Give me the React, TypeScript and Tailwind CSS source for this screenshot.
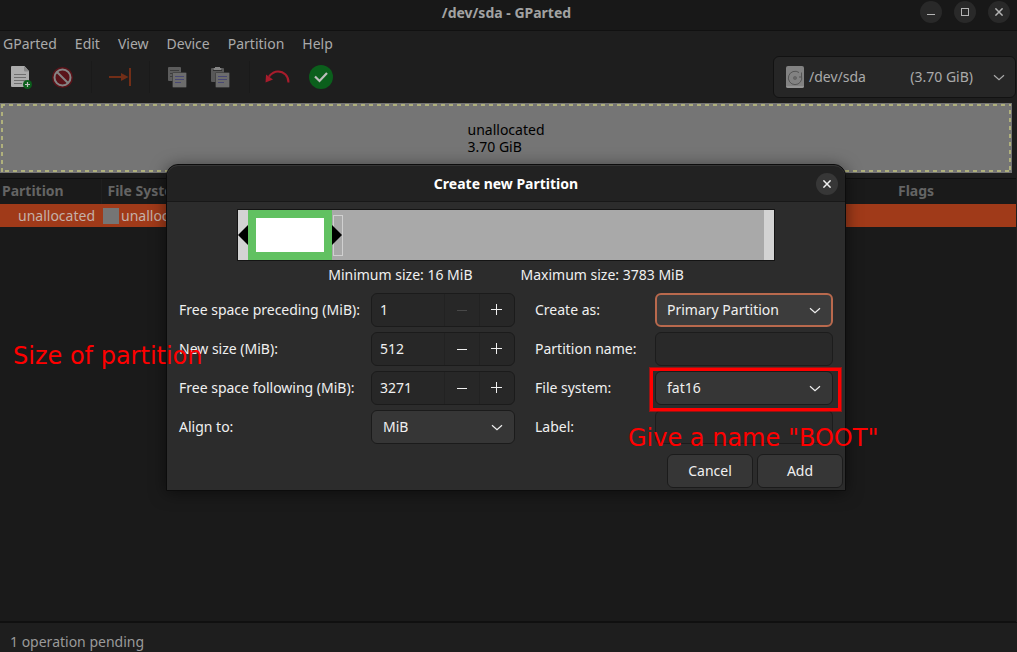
import React from "react";

function Chevron({ className = "" }: { className?: string }) {
  return (
    <svg
      className={`pointer-events-none h-3 w-3 ${className}`}
      viewBox="0 0 12 12"
      fill="none"
      stroke="currentColor"
      strokeWidth="1.2"
      aria-hidden="true"
    >
      <path d="M1 4.200 6 8.600 11 4.200" />
    </svg>
  );
}

function CloseGlyph() {
  return (
    <svg width="8" height="8" viewBox="0 0 8 8" stroke="currentColor" strokeWidth="1.5" aria-hidden="true">
      <path d="M0.4 0.4 7.6 7.6M7.6 0.4 0.4 7.6" />
    </svg>
  );
}

function WindowButton({ label, children }: { label: string; children: React.ReactNode }) {
  return (
    <button
      aria-label={label}
      className="flex h-[22px] w-[22px] items-center justify-center rounded-full bg-[#292929] text-[#b4b4b4]"
    >
      {children}
    </button>
  );
}

function ToolButton({ label, children }: { label: string; children: React.ReactNode }) {
  return (
    <button aria-label={label} className="flex h-10 w-[41px] items-center justify-center">
      {children}
    </button>
  );
}

function ToolSeparator() {
  return <span className="mx-[7px] h-8 w-px bg-[#1a1a1a]" />;
}

function NewIcon() {
  return (
    <svg width="22" height="24" viewBox="0 0 22 24" aria-hidden="true">
      <path d="M2 1h12.500l4.500 5v15a1 1 0 0 1-1 1H2a1 1 0 0 1-1-1V2a1 1 0 0 1 1-1z" fill="#acacac" />
      <path d="M14 1v4.500a1 1 0 0 0 1 1h4z" fill="#8a8a8a" />
      <path d="M4 9.500h12M4 12.500h12M4 15.500h12M4 18.500h8" stroke="#6e6e6e" />
      <circle cx="17.500" cy="19.500" r="4.500" fill="#0b5f1c" />
      <path d="M17.500 17v5M15 19.500h5" stroke="#c0c0c0" strokeWidth="1.200" />
    </svg>
  );
}

function ForbiddenIcon() {
  return (
    <svg width="22" height="22" viewBox="0 0 22 22" fill="none" aria-hidden="true">
      <circle cx="10.500" cy="11.500" r="10.500" fill="#5a1319" />
      <circle cx="10.500" cy="11.500" r="8" stroke="#858585" strokeWidth="2" />
      <path d="M5 6 16 17" stroke="#858585" strokeWidth="2" />
    </svg>
  );
}

function ResizeIcon() {
  return (
    <svg width="24" height="20" viewBox="0 0 24 20" aria-hidden="true">
      <path d="M0 10h13" stroke="#722e17" strokeWidth="2" />
      <path d="M12 6 19.500 10 12 14z" fill="#722e17" />
      <path d="M21 1v18" stroke="#722e17" strokeWidth="2" />
    </svg>
  );
}

function CopyIcon() {
  return (
    <svg width="24" height="22" viewBox="0 0 24 22" aria-hidden="true">
      <rect x="1" y="1" width="13" height="14" rx="1" fill="#5c5c5c" />
      <path d="M3 4.500h9M3 7.500h3M3 10.500h3" stroke="#3c3c3c" />
      <rect x="5.500" y="6.500" width="14" height="15" rx="1" fill="#6c6c6c" stroke="#333" strokeWidth="0.600" />
      <path d="M8 10.500h9M8 13.500h9M8 16.500h6" stroke="#484874" />
    </svg>
  );
}

function PasteIcon() {
  return (
    <svg width="22" height="22" viewBox="0 0 22 22" aria-hidden="true">
      <rect x="1" y="2" width="13" height="14" rx="1" fill="#585858" />
      <path d="M3 2.500h9v2.500H3z" fill="#303030" />
      <path d="M5 1h5v1h1.500v2h-8V2H5z" fill="#858585" />
      <rect x="5.500" y="6.500" width="14" height="15" rx="1" fill="#6c6c6c" stroke="#333" strokeWidth="0.600" />
      <path d="M8 10.500h9M8 13.500h9M8 16.500h6" stroke="#484874" />
    </svg>
  );
}

function UndoIcon() {
  return (
    <svg width="28" height="14" viewBox="0 0 28 14" fill="none" aria-hidden="true">
      <path d="M4 6.500C6.500 3.500 9.500 1.500 13 1.500C19 1.500 23.500 6 23.500 12.500" stroke="#a81c2c" strokeWidth="2" />
      <path d="M1 4.500 0.500 12.500 8 9.500z" fill="#a81c2c" />
    </svg>
  );
}

function ApplyIcon() {
  return (
    <svg width="24" height="24" viewBox="0 0 24 24" fill="none" aria-hidden="true">
      <circle cx="12" cy="12" r="12" fill="#0b5f1c" />
      <path d="m6 11.500 4.500 4.500 7.500-8" stroke="#bdbdbd" strokeWidth="2.200" />
    </svg>
  );
}

function DiskIcon() {
  return (
    <svg width="18" height="22" viewBox="0 0 18 22" fill="none" aria-hidden="true">
      <rect width="18" height="22" rx="2" fill="#828282" />
      <path d="M0 20h18v0a2 2 0 0 1-2 2H2a2 2 0 0 1-2-2z" fill="#949494" />
      <path d="M15.500 10a6.700 6.700 0 1 1-2.500-3.500" stroke="#555" />
      <path d="M15.500 6.500v4.500h-2.500" stroke="#555" />
      <circle cx="9" cy="12" r="1.800" fill="#555" />
      <circle cx="9" cy="12" r="0.700" fill="#828282" />
    </svg>
  );
}

const menus = ["GParted", "Edit", "View", "Device", "Partition", "Help"];

function MainWindow() {
  return (
    <div className="flex min-h-screen flex-col">
      <header className="grid h-[31px] grid-cols-[1fr_auto_1fr] border-b border-[#111] bg-[#181818]">
        <h1 className="col-start-2 pt-[3px] pr-1 text-sm leading-5 font-bold text-[#a2a2a2]">/dev/sda - GParted</h1>
        <div className="flex justify-end gap-3 pt-px pr-[7px]">
          <WindowButton label="Minimize">
            <span className="mt-1 h-px w-2 bg-current" />
          </WindowButton>
          <WindowButton label="Maximize">
            <span className="h-2 w-2 border border-current" />
          </WindowButton>
          <WindowButton label="Close">
            <CloseGlyph />
          </WindowButton>
        </div>
      </header>

      <nav className="flex h-[25px] items-center gap-[18px] pl-[3px] text-[#aaa]">
        {menus.map((menu) => (
          <button key={menu}>{menu}</button>
        ))}
      </nav>

      <div className="flex h-[47px] items-start justify-between">
        <div className="flex items-center gap-px pt-px">
          <ToolButton label="New">
            <NewIcon />
          </ToolButton>
          <ToolButton label="Delete">
            <ForbiddenIcon />
          </ToolButton>
          <ToolSeparator />
          <ToolButton label="Resize or move">
            <ResizeIcon />
          </ToolButton>
          <ToolSeparator />
          <ToolButton label="Copy">
            <CopyIcon />
          </ToolButton>
          <ToolButton label="Paste">
            <PasteIcon />
          </ToolButton>
          <ToolSeparator />
          <ToolButton label="Undo">
            <UndoIcon />
          </ToolButton>
          <ToolButton label="Apply">
            <ApplyIcon />
          </ToolButton>
        </div>
        <button className="mr-px flex h-[42px] w-[243px] items-center rounded-md border border-[#121212] bg-[#262626] px-3 text-[#aaa]">
          <DiskIcon />
          <span className="ml-[5px]">/dev/sda</span>
          <span className="ml-auto">(3.70 GiB)</span>
          <Chevron className="ml-[20px] -mr-0.5" />
        </button>
      </div>

      <div className="relative mr-[5px] flex h-[70px] items-center justify-center bg-[#757575] text-black">
        <svg className="absolute inset-px h-[68px] w-[calc(100%-2px)]" aria-hidden="true">
          <rect width="100%" height="100%" fill="none" stroke="#afb07c" strokeWidth="4" strokeDasharray="4 4" />
        </svg>
        <p className="leading-[17px]">
          unallocated
          <br />
          3.70 GiB
        </p>
      </div>

      <main className="mt-[5px] mr-px grow border-y border-[#101010] bg-[#1a1a1a]">
        <table className="w-full table-fixed border-collapse text-left">
          <colgroup>
            <col className="w-[101px]" />
            <col />
            <col className="w-[125px]" />
          </colgroup>
          <thead>
            <tr className="h-[25px] text-[#646464]">
              <th className="border-r border-[#1f1f1f] pt-0 pb-0.5 pl-0.5">Partition</th>
              <th className="pt-0 pb-0.5 pl-1.5">File System</th>
              <th className="pt-0 pb-0.5 pl-[7px]">Flags</th>
            </tr>
          </thead>
          <tbody>
            <tr className="h-[23px] bg-[#a03a19] text-[#c4b0a8]">
              <td className="py-0 pl-[18px]">unallocated</td>
              <td className="py-0 pl-0.5">
                <span className="flex items-center gap-0.5">
                  <span className="h-4 w-4 bg-[#757575]" />
                  unallocated
                </span>
              </td>
              <td />
            </tr>
          </tbody>
        </table>
      </main>

      <footer className="border-t border-[#101010] pt-[9px] pl-2.5 text-[#9a9a9a]">1 operation pending</footer>
    </div>
  );
}

function PartitionSlider() {
  return (
    <div className="mx-auto mt-[7px] w-[538px] border border-[#141414]">
      <svg className="block" width="536" height="50" viewBox="0 0 536 50" role="img" aria-label="Partition size">
        <rect width="536" height="50" fill="#a9a9a9" />
        <rect width="10" height="50" fill="#d3d3d3" />
        <rect x="526" width="10" height="50" fill="#d3d3d3" />
        <rect x="10" width="84" height="50" fill="#61c161" />
        <rect x="18" y="8" width="68" height="34" fill="#fff" />
        <rect x="95.500" y="5.500" width="9" height="40" fill="none" stroke="#d0d0d0" />
        <path d="M10 15v20L0 25z" fill="#000" />
        <path d="M94 15v20L104 25z" fill="#000" />
      </svg>
    </div>
  );
}

interface SpinProps {
  id: string;
  label: string;
  value: string;
  atMinimum?: boolean;
}

function SpinRow({ id, label, value, atMinimum = false }: SpinProps) {
  return (
    <>
      <label htmlFor={id}>{label}</label>
      <div className="flex h-[34px] overflow-hidden rounded-md border border-[#1b1b1b] bg-[#272727]">
        <input id={id} defaultValue={value} className="w-0 grow bg-transparent pl-2 outline-none" />
        <button
          aria-label={`Decrease ${label}`}
          disabled={atMinimum}
          className="flex w-[35px] items-center justify-center border-l border-[#222] text-[#f0f0f0] disabled:text-[#484848]"
        >
          <span className="h-px w-2.5 bg-current" />
        </button>
        <button
          aria-label={`Increase ${label}`}
          className="flex w-[35px] items-center justify-center border-l border-[#222]"
        >
          <svg width="12" height="12" viewBox="0 0 12 12" stroke="#f0f0f0" aria-hidden="true">
            <path d="M0 5.500h11M5.500 0v11" />
          </svg>
        </button>
      </div>
    </>
  );
}

function SelectRow({ id, label, value, focused = false }: { id: string; label: string; value: string; focused?: boolean }) {
  return (
    <>
      <label htmlFor={id}>{label}</label>
      <div className="relative h-[34px]">
        <select
          id={id}
          className={`h-full w-full appearance-none rounded-md outline-none ${
            focused ? "border-2 border-[#b9694d] bg-[#3c3c3c] pl-2.5" : "border border-[#1b1b1b] bg-[#363636] pl-[11px]"
          }`}
        >
          <option>{value}</option>
        </select>
        <Chevron className="absolute top-[11px] right-3" />
      </div>
    </>
  );
}

function TextRow({ id, label }: { id: string; label: string }) {
  return (
    <>
      <label htmlFor={id}>{label}</label>
      <input id={id} className="h-[34px] w-full rounded-md border border-[#1c1c1c] bg-[#292929] px-2 outline-none" />
    </>
  );
}

function CreateDialog() {
  return (
    <section
      role="dialog"
      aria-labelledby="dialog-title"
      className="absolute top-[164px] left-[166px] w-[680px] rounded-t-xl border border-[#0c0c0c] bg-[#2c2c2c] text-[#f0f0f0] shadow-[0_2px_16px_rgba(0,0,0,0.5)]"
    >
      <header className="grid h-[37px] grid-cols-[1fr_auto_1fr] items-center rounded-t-xl border-t border-b border-t-[#343434] border-b-[#181818] bg-[#222]">
        <h2 id="dialog-title" className="col-start-2 font-bold text-white">
          Create new Partition
        </h2>
        <button
          aria-label="Close dialog"
          className="mr-[7px] flex h-[22px] w-[22px] items-center justify-center justify-self-end rounded-full bg-[#373737]"
        >
          <CloseGlyph />
        </button>
      </header>

      <PartitionSlider />

      <div className="mt-1 flex justify-center gap-12">
        <span>Minimum size: 16 MiB</span>
        <span>Maximum size: 3783 MiB</span>
      </div>

      <form className="mt-2 flex justify-between pr-3 pl-3">
        <div className="grid grid-cols-[192px_144px] items-center gap-y-[5px]">
          <SpinRow id="preceding" label="Free space preceding (MiB):" value="1" atMinimum />
          <SpinRow id="size" label="New size (MiB):" value="512" />
          <SpinRow id="following" label="Free space following (MiB):" value="3271" />
          <SelectRow id="align" label="Align to:" value="MiB" />
        </div>
        <div className="grid grid-cols-[120px_178px] items-center gap-y-[5px]">
          <SelectRow id="create-as" label="Create as:" value="Primary Partition" focused />
          <TextRow id="name" label="Partition name:" />
          <SelectRow id="filesystem" label="File system:" value="fat16" />
          <TextRow id="label" label="Label:" />
        </div>
      </form>

      <div className="mt-2.5 flex justify-end gap-1 pr-0.5 pb-0.5">
        <button className="h-[34px] w-[86px] rounded-md border border-[#1b1b1b] bg-[#363636]">Cancel</button>
        <button className="h-[34px] w-[86px] rounded-md border border-[#1b1b1b] bg-[#363636]">Add</button>
      </div>
    </section>
  );
}

export default function App() {
  return (
    <div className="relative min-h-screen overflow-hidden bg-[#1e1e1e] font-['Noto_Sans',sans-serif] text-sm leading-5">
      <MainWindow />
      <CreateDialog />
      <div className="pointer-events-none absolute top-[368px] left-[650px] h-[43px] w-[191px] border-3 border-[#f00] ring-1 ring-[#f00]/50" />
      <p className="absolute top-[342px] left-[13px] font-['DejaVu_Sans',sans-serif] text-2xl leading-7 whitespace-nowrap text-[#f00]">
        Size of partition
      </p>
      <p className="absolute top-[424px] left-[628px] font-['DejaVu_Sans',sans-serif] text-2xl leading-7 whitespace-nowrap text-[#f00]">
        Give a name "BOOT"
      </p>
    </div>
  );
}
